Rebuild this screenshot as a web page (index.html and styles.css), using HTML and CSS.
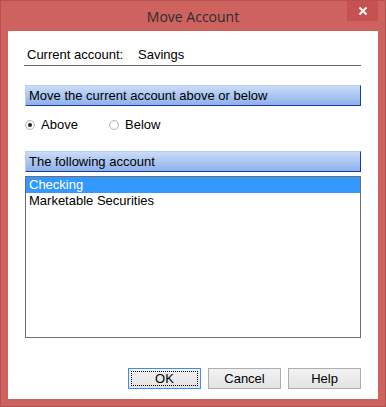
FILE: index.html
```html
<!DOCTYPE html>
<html lang="en">
<head>
    <meta charset="UTF-8">
    <title>Move Account</title>
    <link rel="stylesheet" href="styles.css">
</head>
<body>
    <div class="window">
        <div class="titlebar">
            <span></span>
            <span class="title">Move Account</span>
            <button class="close" aria-label="Close">
                <svg width="10" height="10" viewBox="0 0 10 10">
                    <path d="M1.5 1.5 L8.5 8.5 M8.5 1.5 L1.5 8.5" stroke="#fff" stroke-width="2" fill="none"/>
                </svg>
            </button>
        </div>

        <div class="client">
            <div class="current">
                <span class="current-label">Current account:</span>
                <span>Savings</span>
            </div>

            <div class="section-head">Move the current account above or below</div>

            <div class="radios">
                <label class="radio radio-first"><span class="radio-dot checked"></span>Above</label>
                <label class="radio"><span class="radio-dot"></span>Below</label>
            </div>

            <div class="section-head">The following account</div>

            <ul class="list">
                <li class="selected">Checking</li>
                <li>Marketable Securities</li>
            </ul>

            <div class="buttons">
                <button class="btn btn-default"><span class="focus">OK</span></button>
                <button class="btn">Cancel</button>
                <button class="btn">Help</button>
            </div>
        </div>
    </div>
</body>
</html>
```

FILE: styles.css
```css
* {
    margin: 0;
    padding: 0;
    box-sizing: border-box;
}

body {
    font-family: 'Liberation Sans', Arial, sans-serif;
    font-size: 13px;
    color: #000;
    background: #fff;
}

.window {
    width: 386px;
    height: 407px;
    background: #cd625f;
    border: 1px solid #b4524f;
    padding: 0 7px 7px;
    display: flex;
    flex-direction: column;
}

.titlebar {
    height: 30px;
    display: grid;
    grid-template-columns: 31px 1fr 31px;
    align-items: start;
}

.title {
    align-self: center;
    text-align: center;
    font-family: 'Open Sans', 'Noto Sans', sans-serif;
    font-size: 14px;
    color: #2e2e2e;
}

.close {
    width: 31px;
    height: 20px;
    border: none;
    background: #c75050;
    display: flex;
    align-items: center;
    justify-content: center;
}

.client {
    flex: 1;
    background: #fff;
    padding: 0 17px 0 16px;
    display: flex;
    flex-direction: column;
}

.current {
    margin-top: 16px;
    height: 19px;
    line-height: 16px;
    padding-left: 3px;
    border-bottom: 1px solid #646464;
    display: flex;
}

.current-label {
    width: 111px;
}

.section-head {
    margin-top: 19px;
    margin-left: 1px;
    height: 21px;
    line-height: 19px;
    padding-left: 3px;
    border: 1px solid;
    border-color: #b9d0f4 #1c3a9a #1c3a9a #b9d0f4;
    background: linear-gradient(#cadcf8, #8eb0ea);
}

.radios {
    margin-top: 11px;
    margin-left: 1px;
    height: 16px;
    line-height: 16px;
    display: flex;
}

.radio {
    display: flex;
    align-items: center;
    gap: 6px;
}

.radio-first {
    width: 84px;
}

.radio-dot {
    width: 10px;
    height: 10px;
    border-radius: 50%;
    border: 1px solid #b8b8b8;
    background: radial-gradient(circle, #fff 40%, #e6e6e6 100%);
    display: flex;
    align-items: center;
    justify-content: center;
}

.radio-dot.checked::after {
    content: '';
    width: 4px;
    height: 4px;
    border-radius: 50%;
    background: #222;
}

.radios + .section-head {
    margin-top: 18px;
}

.list {
    list-style: none;
    margin-top: 4px;
    margin-left: 1px;
    height: 162px;
    border: 1px solid #6e6e6e;
    line-height: 16px;
}

.list li {
    padding-left: 3px;
}

.list .selected {
    background: #3399ff;
    color: #fff;
}

.buttons {
    margin-top: 30px;
    display: flex;
    justify-content: flex-end;
    gap: 7px;
}

.btn {
    width: 73px;
    height: 21px;
    font-family: inherit;
    font-size: 13px;
    color: #000;
    border: 1px solid #adadad;
    background: linear-gradient(#f2f2f2, #e3e3e3);
    display: flex;
    align-items: center;
    justify-content: center;
}

.btn-default {
    border-color: #3c8ff0;
    padding: 2px;
}

.focus {
    width: 100%;
    height: 100%;
    border: 1px dotted #000;
    line-height: 13px;
    display: flex;
    align-items: center;
    justify-content: center;
}
```
